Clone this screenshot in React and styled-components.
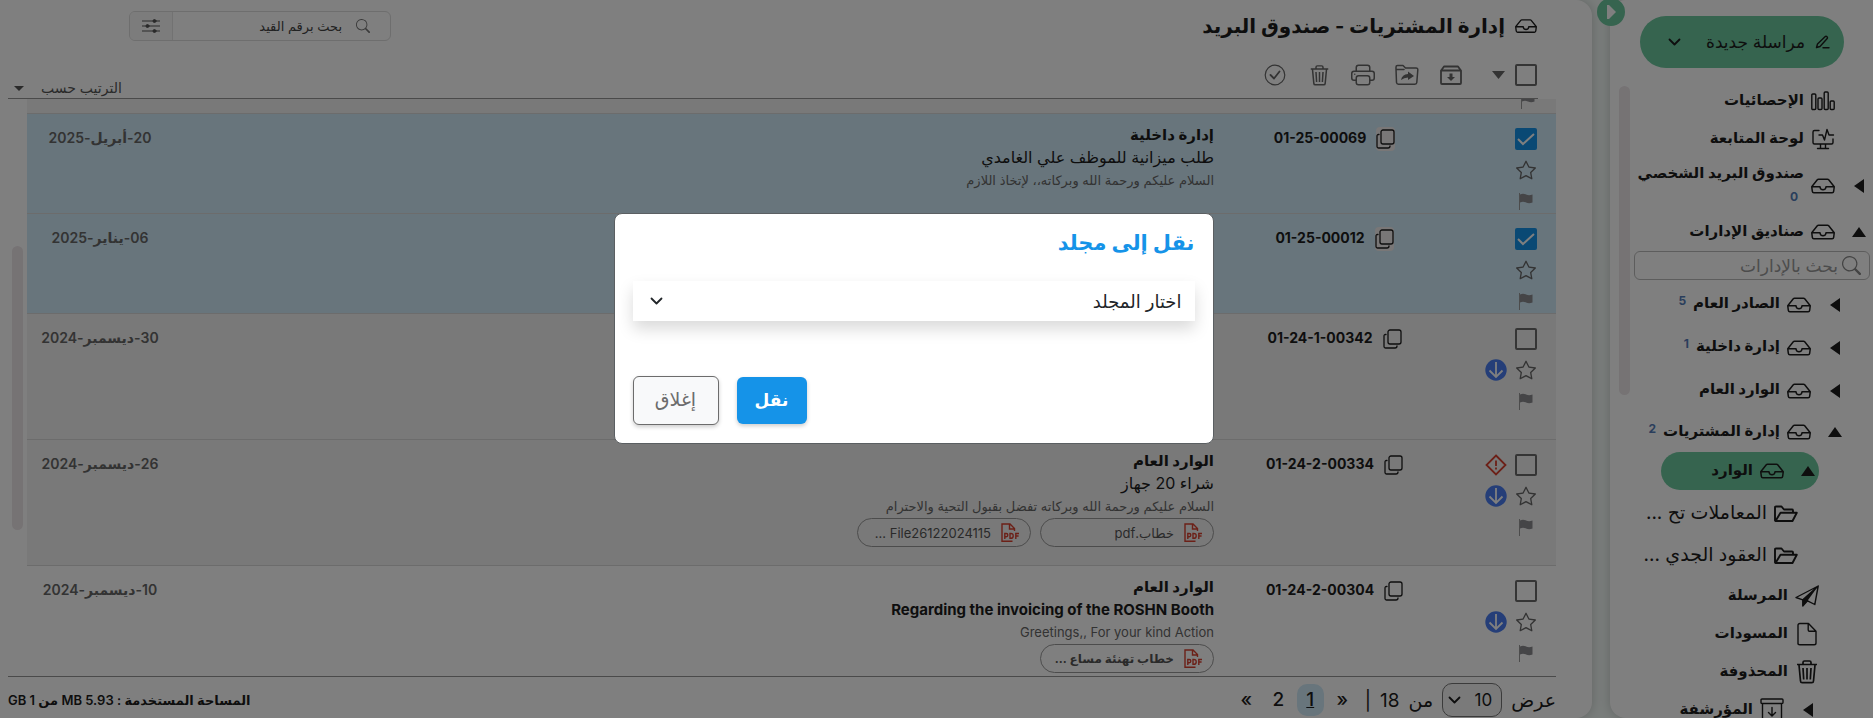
import React from 'react';
import styled, { createGlobalStyle, css } from 'styled-components';
import { BsInbox, BsSearch, BsStar, BsPrinter } from 'react-icons/bs';

const GlobalStyle = createGlobalStyle`
  * {
    box-sizing: border-box;
  }

  body {
    margin: 0;
    overflow: hidden;
    font-family: Inter, 'DejaVu Sans', sans-serif;
    color: #1c1c1c;
    background: #f3faf7;
  }

  button, input, select {
    font-family: inherit;
    color: inherit;
    margin: 0;
  }

  button {
    background: none;
    border: none;
    padding: 0;
    cursor: pointer;
  }

  a {
    color: inherit;
    text-decoration: none;
  }

  svg {
    display: block;
    flex: none;
  }
`;

const Page = styled.div`
  display: flex;
  gap: 18px;
  height: 100vh;
`;

/* Sidebar */

const Sidebar = styled.aside`
  position: relative;
  flex: none;
  width: 263px;
  display: flex;
  flex-direction: column;
  background: #fff;
  border-radius: 16px 0 0 16px;
  box-shadow: 0 0 12px rgba(0, 0, 0, 0.2);
`;

const Collapse = styled.button`
  position: absolute;
  left: -13px;
  top: -2px;
  width: 28px;
  height: 28px;
  border-radius: 50%;
  background: #6cc89e;
  display: flex;
  align-items: center;
  justify-content: center;
`;

const Compose = styled.button`
  flex: none;
  display: flex;
  align-items: center;
  gap: 10px;
  width: 204px;
  height: 52px;
  margin: 16px 29px 14px 0;
  padding: 0 14px 0 28px;
  border-radius: 26px;
  background: #6cc89e;
  font-size: 17px;

  span {
    flex: 1;
    text-align: right;
  }
`;

const SidebarBody = styled.div`
  flex: 1;
  min-height: 0;
  display: flex;
`;

const Tree = styled.nav`
  flex: 1;
  min-width: 0;
  overflow: hidden;
`;

const Thumb = styled.div`
  flex: none;
  width: 11px;
  height: ${({ $height }) => $height}px;
  margin: ${({ $top }) => $top}px 4px 0 ${({ $left }) => $left}px;
  border-radius: 6px;
  background: #ede6e9;
`;

const Count = styled.span`
  font-size: 12px;
  font-weight: 700;
  color: #557db8;
`;

const Label = styled.span`
  display: flex;
  flex-direction: ${({ $stack }) => ($stack ? 'column' : 'row')};
  gap: 7px;
  padding: 0 7px 4px 0;

  ${Count} {
    padding-right: ${({ $stack }) => ($stack ? 6 : 0)}px;
  }
`;

const Node = styled.a`
  display: flex;
  align-items: center;
  height: ${({ $height }) => $height || 38}px;
  padding-right: ${({ $indent }) => $indent}px;
  font-size: ${({ $light }) => ($light ? 19 : 15)}px;
  font-weight: ${({ $light }) => ($light ? 400 : 700)};
  white-space: nowrap;

  ${({ $active }) =>
    $active &&
    css`
      width: 158px;
      margin: 0 54px 3px 0;
      border-radius: 19px;
      background: #6cc89e;
    `}
`;

const Arrow = styled.span`
  width: 20px;
  margin-left: 14px;
  display: flex;
  justify-content: center;
`;

const TreeSearch = styled.label`
  display: flex;
  align-items: center;
  gap: 4px;
  height: 29px;
  margin: 0 3px 3px 0;
  padding: 0 8px;
  border: 1px solid #bbb;
  border-radius: 6px;
  color: #888;

  input {
    flex: 1;
    min-width: 0;
    border: none;
    outline: none;
    padding: 0;
    background: none;
    font-size: 17px;
  }

  input::placeholder {
    color: #999;
    opacity: 1;
  }
`;

/* Mailbox */

const Main = styled.main`
  flex: 1;
  min-width: 0;
  display: flex;
  flex-direction: column;
  background: #fff;
  border-radius: 0 16px 16px 0;
  box-shadow: 0 0 12px rgba(0, 0, 0, 0.2);
`;

const Header = styled.header`
  height: 52px;
  display: flex;
  align-items: center;
  justify-content: space-between;
  padding: 0 55px 0 129px;
`;

const Title = styled.h1`
  display: flex;
  align-items: center;
  gap: 10px;
  margin: 0;
  font-size: 20px;
  font-weight: 700;
`;

const Search = styled.div`
  display: flex;
  width: 262px;
  height: 30px;
  border: 1px solid #dcdcdc;
  border-radius: 6px;
  overflow: hidden;

  label {
    flex: 1;
    min-width: 0;
    display: flex;
    align-items: center;
    gap: 14px;
    padding-right: 20px;
    color: #777;
  }

  input {
    flex: 1;
    min-width: 0;
    padding: 0;
    border: none;
    outline: none;
    font-size: 13px;
  }

  input::placeholder {
    color: #444;
    opacity: 1;
  }

  button {
    flex: none;
    width: 43px;
    display: flex;
    align-items: center;
    justify-content: center;
    background: #f8f8f8;
    border-right: 1px solid #e4e4e4;
    color: #555;
  }
`;

const Toolbar = styled.div`
  display: flex;
  align-items: center;
  height: 47px;
  margin: 0 54px 0 8px;
  padding: 0 1px 0 6px;
  border-bottom: 1px solid #959595;
  color: #666;
`;

const Tools = styled.div`
  flex: 1;
  display: flex;
  align-items: center;
  gap: 20px;
  padding-right: 10px;

  > svg {
    margin-left: 9px;
  }

  button {
    width: 24px;
    display: flex;
    justify-content: center;
  }
`;

const Sort = styled.button`
  align-self: flex-end;
  display: flex;
  align-items: center;
  gap: 17px;
  font-size: 14px;
  line-height: 20px;
  color: #555;
`;

const Check = styled.input`
  appearance: none;
  flex: none;
  width: 22px;
  height: 22px;
  border: 2px solid #6a6a6a;
  border-radius: 2px;

  &:checked {
    border: none;
    background: #1593e8
      url("data:image/svg+xml,%3Csvg xmlns='http://www.w3.org/2000/svg' viewBox='0 0 22 22'%3E%3Cpath d='M3 11l5 5L19 6' fill='none' stroke='white' stroke-width='2'/%3E%3C/svg%3E");
  }
`;

const ListArea = styled.div`
  flex: 1;
  min-height: 0;
  display: flex;
  padding-right: 36px;
`;

const List = styled.div`
  flex: 1;
  min-width: 0;
  overflow: hidden;
`;

const Clipped = styled.div`
  height: 15px;
  overflow: hidden;
  display: flex;
  align-items: flex-end;
  padding: 0 21px 4px 0;
  background: #f2f2f2;
  border-bottom: 1px solid #d9d9d9;
`;

const Row = styled.article`
  display: flex;
  min-height: ${({ $tall }) => ($tall ? 126 : 100)}px;
  border-bottom: 1px solid #d9d9d9;
  background: ${({ $tone }) => $tone};
`;

const Marks = styled.div`
  width: 101px;
  padding: 14px 19px 0 0;
  display: flex;
  flex-direction: column;
  gap: 9px;
`;

const MarkLine = styled.div`
  display: flex;
  align-items: center;
  gap: 8px;
  height: 22px;
  color: #666;
`;

const Slot = styled.button`
  width: 22px;
  display: flex;
  justify-content: center;
`;

const Number = styled.div`
  width: 241px;
  padding-top: 13px;
  display: flex;
  align-items: flex-start;
  justify-content: center;
  gap: 10px;
  font-size: 14px;
  font-weight: 700;
  line-height: 22px;

  button {
    height: 24px;
    display: flex;
    align-items: center;
    border-radius: 4px;
    background: ${({ $selected }) => ($selected ? '#f2eeee' : 'none')};
  }
`;

const Body = styled.div`
  flex: 1;
  min-width: 0;
  padding-top: 9px;
`;

const From = styled.div`
  font-size: 15px;
  font-weight: 700;
  line-height: 23px;
`;

const Subject = styled.div`
  font-size: ${({ $bold }) => ($bold ? 15 : 16)}px;
  font-weight: ${({ $bold }) => ($bold ? 700 : 400)};
  line-height: 23px;
`;

const Excerpt = styled.div`
  font-size: 13px;
  line-height: 23px;
  color: #666;
`;

const Chips = styled.div`
  display: flex;
  gap: 9px;
`;

const Chip = styled.a`
  display: flex;
  align-items: center;
  gap: 10px;
  width: 174px;
  height: 29px;
  padding: 0 10px;
  border: 1px solid #999;
  border-radius: 15px;
  font-size: ${({ $bold }) => ($bold ? 12 : 13)}px;
  font-weight: ${({ $bold }) => ($bold ? 700 : 400)};
  white-space: nowrap;
  color: #555;
`;

const Day = styled.time`
  width: 146px;
  padding-top: 13px;
  text-align: center;
  font-size: 14px;
  font-weight: 600;
  line-height: 22px;
  color: #666;
`;

const Footer = styled.footer`
  flex: none;
  height: 42px;
  margin: 0 36px 0 8px;
  border-top: 1px solid #959595;
  display: flex;
  align-items: center;
  justify-content: space-between;
  padding-top: 5px;
  font-size: 13px;
  font-weight: 600;
`;

const Pager = styled.div`
  display: flex;
  align-items: center;
  gap: 9px;
  font-size: 19px;
  font-weight: 400;
`;

const PageSize = styled.span`
  display: flex;
  align-items: center;
  width: 60px;
  height: 34px;
  border: 1px solid #777;
  border-radius: 10px;
  padding: 0 9px 0 5px;
  background: #f4f4f4;

  select {
    flex: 1;
    min-width: 0;
    appearance: none;
    border: none;
    outline: none;
    background: none;
    padding: 0;
    font-size: 17px;
  }
`;

const PageLinks = styled.nav`
  display: flex;
  gap: 5px;
`;

const PageLink = styled.a`
  min-width: 27px;
  height: 32px;
  line-height: 32px;
  text-align: center;
  border-radius: 10px;
  font-weight: 500;
  background: ${({ $current }) => ($current ? '#d0eaf8' : 'none')};
  text-decoration: ${({ $current }) => ($current ? 'underline' : 'none')};
`;

/* Dialog */

const Backdrop = styled.div`
  position: fixed;
  inset: 0;
  padding: 213px 46px 0 0;
  background: rgba(0, 0, 0, 0.5);
`;

const Dialog = styled.form`
  width: 600px;
  max-width: 100%;
  margin: 0 auto;
  padding: 15px 18px 18px;
  background: #fff;
  border: 1px solid #5b5f62;
  border-radius: 8px;
`;

const DialogTitle = styled.h2`
  margin: 0 0 24px;
  font-size: 21px;
  line-height: 28px;
  font-weight: 700;
  color: #1593e8;
`;

const FolderField = styled.div`
  display: flex;
  align-items: center;
  height: 40px;
  padding: 0 13px 0 17px;
  box-shadow: 0 8px 16px rgba(0, 0, 0, 0.15);
  color: #212529;

  select {
    flex: 1;
    appearance: none;
    border: none;
    outline: none;
    background: none;
    padding: 0;
    font-size: 18px;
  }
`;

const Actions = styled.div`
  display: flex;
  justify-content: flex-end;
  align-items: center;
  gap: 18px;
  padding-top: 55px;
`;

const Action = styled.button`
  height: ${({ $primary }) => ($primary ? 47 : 49)}px;
  width: ${({ $primary }) => ($primary ? 70 : 86)}px;
  padding-bottom: 2px;
  border: ${({ $primary }) => ($primary ? 'none' : '1px solid #6c6c6c')};
  border-radius: 6px;
  background: ${({ $primary }) => ($primary ? '#1593e8' : '#f8f9fa')};
  color: ${({ $primary }) => ($primary ? '#fff' : '#6c6c6c')};
  font-size: ${({ $primary }) => ($primary ? 17 : 19)}px;
  font-weight: ${({ $primary }) => ($primary ? 700 : 400)};
  box-shadow: 0 2px 4px rgba(0, 0, 0, 0.2);
`;

/* Icons */

const Line = ({ w = 24, h = 24, sw = 1.4, children }) => (
  <svg
    width={w}
    height={h}
    viewBox={`0 0 ${w} ${h}`}
    fill="none"
    stroke="currentColor"
    strokeWidth={sw}
    strokeLinejoin="round"
    strokeLinecap="round"
    aria-hidden="true"
  >
    {children}
  </svg>
);

const Triangle = ({ dir, w = 14, h = 10 }) => {
  const d = {
    up: `M0 ${h}L${w / 2} 0L${w} ${h}z`,
    down: `M0 0H${w}L${w / 2} ${h}z`,
    left: `M${w} 0V${h}L0 ${h / 2}z`,
  }[dir];
  return (
    <svg width={w} height={h} fill="currentColor" aria-hidden="true">
      <path d={d} />
    </svg>
  );
};

const Chevron = () => (
  <Line w={13} h={9} sw={1.8}>
    <path d="M1.5 1.5l5 5 5-5" />
  </Line>
);

const StatsIcon = () => (
  <Line h={20}>
    <rect x="0.8" y="3" width="4" height="15.5" rx="1" />
    <rect x="7" y="7" width="4" height="11.5" rx="1" />
    <rect x="13.2" y="1" width="4" height="17.5" rx="1" />
    <rect x="19.2" y="10" width="4" height="8.5" rx="1" />
  </Line>
);

const MonitorIcon = () => (
  <Line h={22}>
    <path d="M8 2.5H3.5Q2 2.5 2 4v10.5Q2 16 3.5 16h17q1.5 0 1.5-1.500V11M8 7h3.500l2 5L16 1.500l2 5.500h4.500M9.500 16v4M14.500 16v4M6.500 20.500h11" />
  </Line>
);

const FolderIcon = () => (
  <Line h={18} sw={1.9}>
    <path d="M1 15.5V2.5Q1 1.5 2 1.5h5.5l2.500 3h8q1 0 1 1V7.500M1.500 16L6.500 7.800h16.300L18.500 16z" />
  </Line>
);

const SendIcon = () => (
  <Line h={22}>
    <path d="M1 12.5L23.2 1l-3.400 18.500-7.300-3.700M1 12.500l6.800 2.300L23.200 1" />
    <path d="M7.8 14.8V21l4.700-5.200L23.200 1z" fill="currentColor" stroke="none" />
    <path d="M7.8 14.8V21l4.700-5.200z" fill="currentColor" />
  </Line>
);

const DraftIcon = () => (
  <Line h={24}>
    <path d="M3 22V3.5Q3 1.5 5 1.5h8.500L21 9.300V21q0 1.800-1.800 1.800H4.800Q3 22.800 3 21M13.200 1.800V8q0 1.300 1.300 1.300H21" />
  </Line>
);

const TrashIcon = ({ w = 24 }) => (
  <svg width={w} height={w} viewBox="0 0 24 24" fill="none" stroke="currentColor" strokeWidth="1.7" aria-hidden="true">
    <path d="M2 4.5h20M8 4V2.5Q8 1 9.5 1h5Q16 1 16 2.500V4M4 5l1.500 16q.1 1.700 1.700 1.700h9.600q1.600 0 1.700-1.700L20 5M8 8l.7 11.500M12 8v11.500M16 8l-.7 11.500" />
  </svg>
);

const ArchiveIcon = () => (
  <Line h={24}>
    <path d="M2 1h20q1 0 1 1v2.5q0 1-1 1H2q-1 0-1-1V2q0-1 1-1zM2.500 5.500V23h19V5.500M12 9.500v8M8.500 14.500l3.500 3.500 3.500-3.500" />
  </Line>
);

const BoxIcon = () => (
  <Line w={22} h={20} sw={1.8}>
    <path d="M1 5.5h20V18q0 1-1 1H2q-1 0-1-1zM1.500 5L4 1.500h14L20.500 5" />
    <path d="M9.5 8.5h3V12H15l-4 4-4-4h2.500z" fill="currentColor" stroke="none" />
  </Line>
);

const FolderShareIcon = () => (
  <Line h={22} sw={1.5}>
    <path d="M1.5 18.5L1 5V3q0-1.500 1.500-1.500H8L10.500 4H21q2 0 1.800 2l-1 12.500q-.1 1.700-2 1.700H3.500q-1.800 0-2-1.700zM1 5.500h8" />
    <path d="M13 7.5l6 4.500-6 4v-2.500q-4 0-7 2.500 1-5.500 7-6z" fill="currentColor" stroke="none" />
  </Line>
);

const CheckCircleIcon = () => (
  <Line w={22} h={22} sw={1.2}>
    <circle cx="11" cy="11" r="9.8" />
    <path d="M6.5 11l3.5 3.5L15.5 7.5" strokeWidth="1.8" />
  </Line>
);

const PencilIcon = () => (
  <Line w={15} h={15} sw={1.4}>
    <path d="M1.5 12.5l1-3.500L10 1.700q1-.9 2 0t0 2L5 11.500zM8 12.800h6" />
  </Line>
);

const SlidersIcon = () => (
  <Line w={18} h={16} sw={1}>
    <path d="M0 3h18M0 8h18M0 13h18" />
    <circle cx="12.5" cy="3" r="1.5" fill="currentColor" />
    <circle cx="5.5" cy="8" r="1.5" fill="currentColor" />
    <circle cx="12.5" cy="13" r="1.5" fill="currentColor" />
  </Line>
);

const CopyIcon = () => (
  <Line w={19} h={20} sw={1.3}>
    <rect x="5" y="1" width="13" height="14" rx="2" />
    <path d="M3 5.500H2.500Q1 5.500 1 7v10.500Q1 19 2.500 19h9.500q2 0 2-2" />
  </Line>
);

const FlagIcon = () => (
  <svg width="14" height="17" viewBox="0 0 14 17" aria-hidden="true">
    <path d="M0.5 0v17" stroke="#999" />
    <path d="M1 1.5q3-1.500 6 0t6.500 0v8q-3.500 1.500-6.500 0t-6 0z" fill="#8a8a8e" />
  </svg>
);

const DownCircle = () => (
  <svg width="22" height="22" viewBox="0 0 22 22" aria-hidden="true">
    <circle cx="11" cy="11" r="10.7" fill="#4a7df0" />
    <path d="M11 3v15M4.5 11.5L11 18l6.500-6.500" fill="none" stroke="#fff" strokeWidth="1.8" />
  </svg>
);

const UrgentIcon = () => (
  <svg width="22" height="22" viewBox="0 0 22 22" fill="none" stroke="#d8402f" aria-hidden="true">
    <path d="M11 1.5L20.5 11 11 20.5 1.5 11z" strokeWidth="1.8" />
    <path d="M11 6.5v5.500M11 13.500v2" strokeWidth="1.8" />
  </svg>
);

const PdfIcon = () => (
  <svg width="19" height="20" viewBox="0 0 19 20" fill="none" stroke="#d8402f" strokeWidth="1.4" aria-hidden="true">
    <path d="M1 19V1h8l4.5 4.5V8M8.500 1v5h5M1 18.300h10.500" />
    <path d="M3.8 16v-5.500h1.500q1.500 0 1.500 1.600t-1.500 1.600H3.800M9 10.500V15.300h.8q2.400 0 2.400-2.400t-2.400-2.400zM14.800 16v-5.500h3.200M14.800 13h2.800" />
  </svg>
);

const inbox = <BsInbox size={24} />;

const topNodes = [
  { label: 'الإحصائيات', icon: <StatsIcon />, indent: 38 },
  { label: 'لوحة المتابعة', icon: <MonitorIcon />, indent: 38 },
  { label: 'صندوق البريد الشخصي', icon: inbox, indent: 4, arrow: 'left', count: 0, height: 55, stack: true },
  { label: 'صناديق الإدارات', icon: inbox, indent: 4, arrow: 'up' },
];

const departmentNodes = [
  { label: 'الصادر العام', icon: inbox, indent: 28, arrow: 'left', count: 5, height: 43 },
  { label: 'إدارة داخلية', icon: inbox, indent: 28, arrow: 'left', count: 1, height: 43 },
  { label: 'الوارد العام', icon: inbox, indent: 28, arrow: 'left', height: 43 },
  { label: 'إدارة المشتريات', icon: inbox, indent: 28, arrow: 'up', count: 2, height: 40 },
  { label: 'الوارد', icon: inbox, indent: 1, arrow: 'up', active: true },
  { label: 'المعاملات تح ...', icon: <FolderIcon />, indent: 75, height: 42, light: true },
  { label: 'العقود الجدي ...', icon: <FolderIcon />, indent: 75, height: 42, light: true },
  { label: 'المرسلة', icon: <SendIcon />, indent: 54 },
  { label: 'المسودات', icon: <DraftIcon />, indent: 54 },
  { label: 'المحذوفة', icon: <TrashIcon />, indent: 54 },
  { label: 'المؤرشفة', icon: <ArchiveIcon />, indent: 55, arrow: 'left' },
];

const mails = [
  {
    number: '01-25-00069',
    from: 'إدارة داخلية',
    subject: 'طلب ميزانية للموظف علي الغامدي',
    excerpt: 'السلام عليكم ورحمة الله وبركاته،، لإتخاذ اللازم',
    date: '20-أبريل-2025',
    selected: true,
    tone: '#d0eaf8',
  },
  { number: '01-25-00012', date: '06-يناير-2025', selected: true, tone: '#d0eaf8' },
  { number: '01-24-1-00342', date: '30-ديسمبر-2024', low: true, tall: true, tone: '#f2f2f2' },
  {
    number: '01-24-2-00334',
    from: 'الوارد العام',
    subject: 'شراء 20 جهاز',
    excerpt: 'السلام عليكم ورحمة الله وبركاته تفضل بقبول التحية والاحترام',
    date: '26-ديسمبر-2024',
    low: true,
    urgent: true,
    tall: true,
    files: ['خطاب.pdf', 'File26122024115 ...'],
    tone: '#f2f2f2',
  },
  {
    number: '01-24-2-00304',
    from: 'الوارد العام',
    subject: 'Regarding the invoicing of the ROSHN Booth',
    excerpt: 'Greetings,, For your kind Action',
    date: '10-ديسمبر-2024',
    low: true,
    tall: true,
    unread: true,
    files: ['خطاب تهنئة مساع ...'],
    tone: '#fff',
  },
];

const TreeNode = ({ node }) => (
  <Node href="#" $indent={node.indent} $height={node.height} $light={node.light} $active={node.active}>
    {node.arrow && (
      <Arrow>
        {node.arrow === 'up' ? <Triangle dir="up" /> : <Triangle dir="left" w={10} h={14} />}
      </Arrow>
    )}
    {node.icon}
    <Label $stack={node.stack}>
      {node.label}
      {node.count !== undefined && <Count>{node.count}</Count>}
    </Label>
  </Node>
);

const MailRow = ({ mail }) => (
  <Row $tone={mail.tone} $tall={mail.tall}>
    <Marks>
      <MarkLine>
        <Check type="checkbox" defaultChecked={mail.selected} aria-label={mail.number} />
        {mail.urgent && <UrgentIcon />}
      </MarkLine>
      <MarkLine>
        <Slot type="button" aria-label="star">
          <BsStar size={20} />
        </Slot>
        {mail.low && <DownCircle />}
      </MarkLine>
      <MarkLine>
        <Slot type="button" aria-label="flag">
          <FlagIcon />
        </Slot>
      </MarkLine>
    </Marks>
    <Number $selected={mail.selected}>
      <button type="button" aria-label="copy">
        <CopyIcon />
      </button>
      <span dir="ltr">{mail.number}</span>
    </Number>
    <Body>
      {mail.from && <From>{mail.from}</From>}
      {mail.subject && <Subject $bold={mail.unread}>{mail.subject}</Subject>}
      {mail.excerpt && <Excerpt>{mail.excerpt}</Excerpt>}
      {mail.files && (
        <Chips>
          {mail.files.map(file => (
            <Chip key={file} href="#" $bold={mail.unread}>
              <PdfIcon />
              {file}
            </Chip>
          ))}
        </Chips>
      )}
    </Body>
    <Day>{mail.date}</Day>
  </Row>
);

const App = () => (
  <React.Fragment>
    <GlobalStyle />
    <Page dir="rtl">
      <Sidebar>
        <Compose type="button">
          <PencilIcon />
          <span>مراسلة جديدة</span>
          <Chevron />
        </Compose>
        <SidebarBody>
          <Tree>
            {topNodes.map(node => (
              <TreeNode key={node.label} node={node} />
            ))}
            <TreeSearch>
              <BsSearch size={19} />
              <input placeholder="بحث بالإدارات" />
            </TreeSearch>
            {departmentNodes.map(node => (
              <TreeNode key={node.label} node={node} />
            ))}
          </Tree>
          <Thumb $height={309} $top={4} $left={9} />
        </SidebarBody>
        <Collapse type="button" aria-label="collapse">
          <svg width="9" height="14" fill="#fff" aria-hidden="true">
            <path d="M0 0h2l7 7-7 7H0z" />
          </svg>
        </Collapse>
      </Sidebar>

      <Main>
        <Header>
          <Title>
            <BsInbox size={22} />
            إدارة المشتريات - صندوق البريد
          </Title>
          <Search>
            <label>
              <BsSearch size={14} />
              <input placeholder="بحث برقم القيد" />
            </label>
            <button type="button" aria-label="filter">
              <SlidersIcon />
            </button>
          </Search>
        </Header>

        <Toolbar>
          <Check type="checkbox" aria-label="select all" />
          <Tools>
            <Triangle dir="down" w={13} h={8} />
            <button type="button" aria-label="archive">
              <BoxIcon />
            </button>
            <button type="button" aria-label="move">
              <FolderShareIcon />
            </button>
            <button type="button" aria-label="print">
              <BsPrinter size={24} />
            </button>
            <button type="button" aria-label="delete">
              <TrashIcon w={21} />
            </button>
            <button type="button" aria-label="done">
              <CheckCircleIcon />
            </button>
          </Tools>
          <Sort type="button">
            الترتيب حسب
            <Triangle dir="down" w={10} h={5} />
          </Sort>
        </Toolbar>

        <ListArea>
          <List>
            <Clipped>
              <FlagIcon />
            </Clipped>
            {mails.map(mail => (
              <MailRow key={mail.number} mail={mail} />
            ))}
          </List>
          <Thumb $height={284} $top={147} $left={12} />
        </ListArea>

        <Footer>
          <Pager>
            <label htmlFor="page-size">عرض</label>
            <PageSize>
              <select id="page-size" defaultValue="10">
                <option>10</option>
              </select>
              <Chevron />
            </PageSize>
            <span>من</span>
            <span>18</span>
            <span>|</span>
            <PageLinks>
              <PageLink href="#" dir="ltr">»</PageLink>
              <PageLink href="#" $current>1</PageLink>
              <PageLink href="#">2</PageLink>
              <PageLink href="#" dir="ltr">«</PageLink>
            </PageLinks>
          </Pager>
          <span>المساحة المستخدمة : 5.93 MB من 1 GB</span>
        </Footer>
      </Main>
    </Page>

    <Backdrop dir="rtl">
      <Dialog role="dialog" aria-labelledby="move-title">
        <DialogTitle id="move-title">نقل إلى مجلد</DialogTitle>
        <FolderField>
          <select aria-labelledby="move-title">
            <option>اختار المجلد</option>
          </select>
          <Chevron />
        </FolderField>
        <Actions>
          <Action type="button" $primary>
            نقل
          </Action>
          <Action type="button">إغلاق</Action>
        </Actions>
      </Dialog>
    </Backdrop>
  </React.Fragment>
);

export default App;
